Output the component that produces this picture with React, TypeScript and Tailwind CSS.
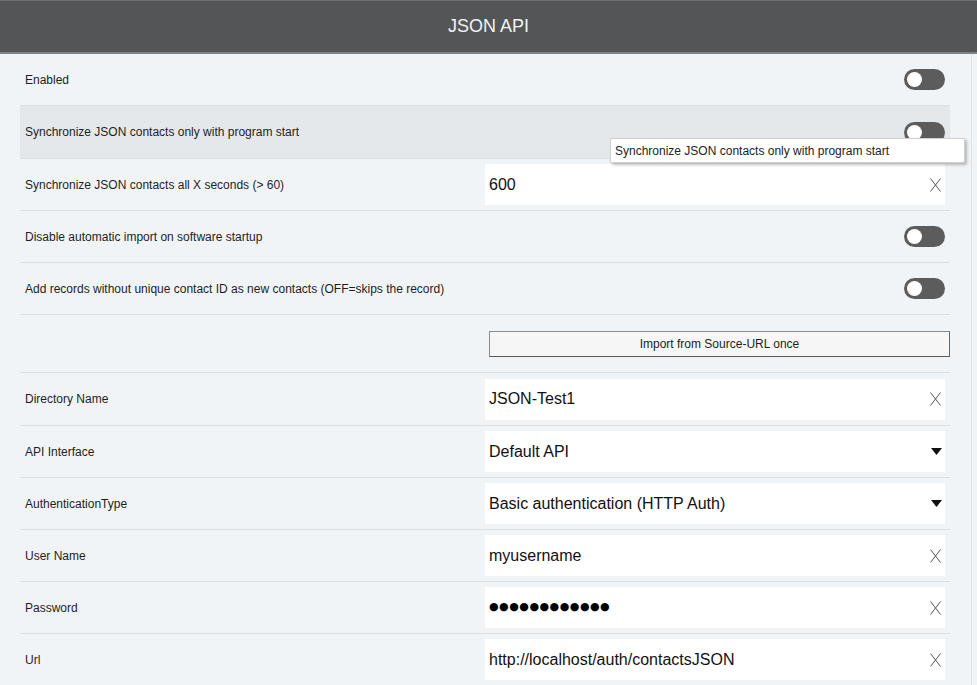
import React from 'react';

type Row =
  | { kind: 'toggle'; label: string; hover?: boolean }
  | { kind: 'text'; label: string; value: string; password?: boolean; tall?: boolean }
  | { kind: 'select'; label: string; value: string }
  | { kind: 'button'; label: string };

const rows: Row[] = [
  { kind: 'toggle', label: 'Enabled' },
  { kind: 'toggle', label: 'Synchronize JSON contacts only with program start', hover: true },
  { kind: 'text', label: 'Synchronize JSON contacts all X seconds (> 60)', value: '600' },
  { kind: 'toggle', label: 'Disable automatic import on software startup' },
  { kind: 'toggle', label: 'Add records without unique contact ID as new contacts (OFF=skips the record)' },
  { kind: 'button', label: 'Import from Source-URL once' },
  { kind: 'text', label: 'Directory Name', value: 'JSON-Test1', tall: true },
  { kind: 'select', label: 'API Interface', value: 'Default API' },
  { kind: 'select', label: 'AuthenticationType', value: 'Basic authentication (HTTP Auth)' },
  { kind: 'text', label: 'User Name', value: 'myusername' },
  { kind: 'text', label: 'Password', value: '●●●●●●●●●●●●', password: true },
  { kind: 'text', label: 'Url', value: 'http://localhost/auth/contactsJSON' },
];

function Toggle() {
  return (
    <div className="w-[41px] h-[21px] rounded-full bg-[#5c5c5c] flex items-center pl-[3px]">
      <div className="w-[15px] h-[15px] rounded-full bg-white" />
    </div>
  );
}

function ClearIcon() {
  return (
    <svg width="11" height="14" viewBox="0 0 11 14" className="shrink-0">
      <path d="M0.5 0.5 L10.5 13.5 M10.5 0.5 L0.5 13.5" stroke="#555" strokeWidth="1" fill="none" />
    </svg>
  );
}

function CaretIcon() {
  return (
    <svg width="11" height="7" viewBox="0 0 11 7" className="shrink-0">
      <path d="M0 0 H11 L5.5 7 Z" fill="#111" />
    </svg>
  );
}

export default function App() {
  return (
    <div className="relative min-h-screen bg-[#f1f4f7] font-['Liberation_Sans',Arial,sans-serif] text-[#1e1e1e]">
      {/* Header */}
      <div className="h-[54px] bg-[#545557] border-t border-[#6e6f71] border-b-2 border-b-[#7c828a] flex items-center justify-center">
        <span className="text-[18px] text-[#f2f2f2]">JSON API</span>
      </div>

      <div className="w-[972px] border-r border-[#e1e4e8] pl-[20px] pr-[21px]">
        {rows.map((row, idx) => {
          if (row.kind === 'button') {
            return (
              <div key={idx} className="h-[58px] flex items-center pl-[469px] border-b border-[#dcdfe2]">
                <button className="w-[461px] h-[26px] bg-[#f6f6f6] border border-[#8c8c8c] border-b-[#5a5a5a] border-r-[#6a6a6a] text-[12px] text-[#1e1e1e]">
                  {row.label}
                </button>
              </div>
            );
          }

          const tall = row.kind === 'toggle' ? row.hover : row.kind === 'text' ? row.tall : false;

          return (
            <div
              key={idx}
              className={`${tall ? 'h-[53px]' : 'h-[52px]'} flex items-center px-[5px] border-b border-[#dcdfe2] ${
                row.kind === 'toggle' && row.hover ? 'bg-[#e5e8eb]' : ''
              }`}
            >
              <div className="w-[460px] shrink-0 text-[12px] text-[#1e1e1e]">{row.label}</div>
              {row.kind === 'toggle' && (
                <div className="flex-1 flex justify-end">
                  <Toggle />
                </div>
              )}
              {row.kind === 'text' && (
                <div className="flex-1 h-[41px] bg-white flex items-center pl-[4px] pr-[4px]">
                  {row.password ? (
                    <span className="flex-1 font-['DejaVu_Sans',sans-serif] text-[11px] tracking-[0.5px] text-black">
                      {row.value}
                    </span>
                  ) : (
                    <span className="flex-1 text-[16px] text-[#111]">{row.value}</span>
                  )}
                  <ClearIcon />
                </div>
              )}
              {row.kind === 'select' && (
                <div className="flex-1 h-[41px] bg-white flex items-center pl-[4px] pr-[3px]">
                  <span className="flex-1 text-[16px] text-[#111]">{row.value}</span>
                  <CaretIcon />
                </div>
              )}
            </div>
          );
        })}
      </div>

      {/* Tooltip */}
      <div className="absolute left-[610px] top-[138px] w-[355px] h-[25px] bg-white border border-[#cfcfcf] rounded-[2px] shadow-[2px_2px_3px_rgba(0,0,0,0.25)] flex items-center pl-[4px] text-[12px] text-[#222]">
        Synchronize JSON contacts only with program start
      </div>
    </div>
  );
}
